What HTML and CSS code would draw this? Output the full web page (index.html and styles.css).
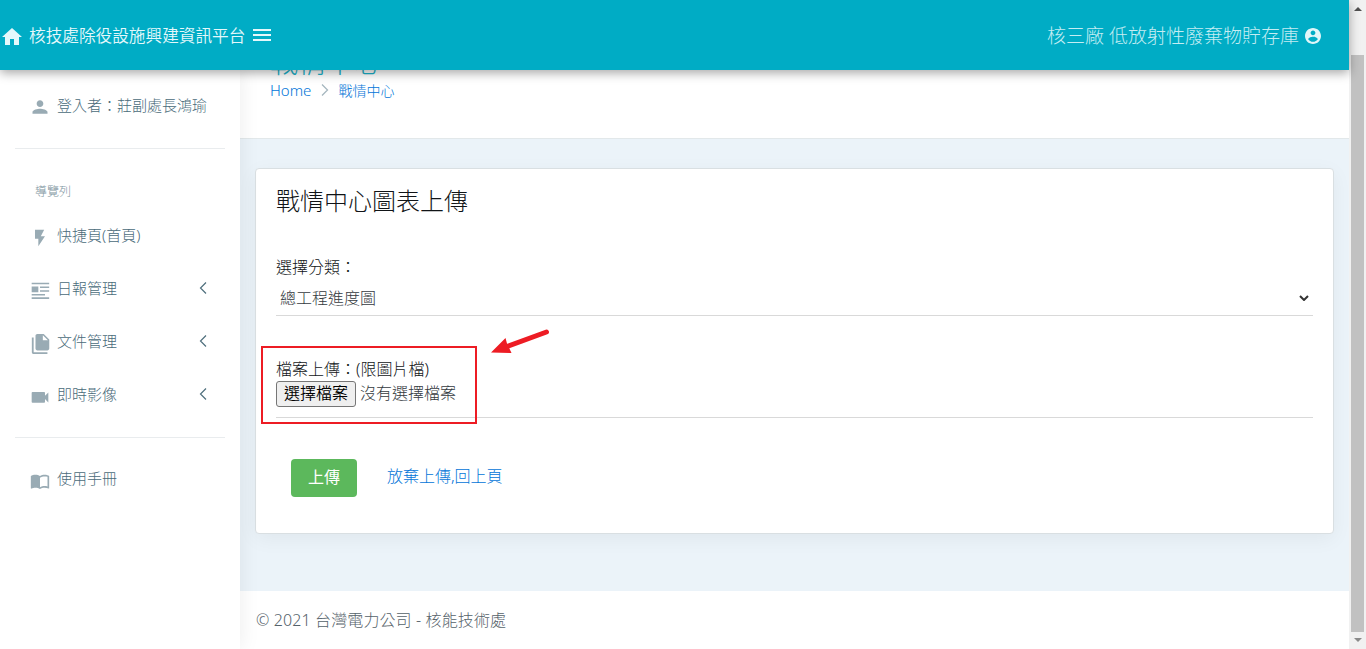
FILE: index.html
```html
<!DOCTYPE html>
<html lang="zh-Hant">
<head>
	<meta charset="UTF-8">
	<title>戰情中心圖表上傳</title>
	<link rel="stylesheet" href="styles.css">
</head>
<body>
	<div class="window">
		<div class="app">
			<header class="topbar">
				<div class="brand">
					<svg class="icon-home" viewBox="2 3 20 17"><path d="M10 20v-6h4v6h5v-8h3L12 3 2 12h3v8z"/></svg>
					<span>核技處除役設施興建資訊平台</span>
					<svg class="icon-menu" viewBox="3 6 18 12"><path d="M3 18h18v-2H3v2zm0-5h18v-2H3v2zm0-7v2h18V6H3z"/></svg>
				</div>
				<div class="site">
					<span>核三廠 低放射性廢棄物貯存庫</span>
					<svg class="icon-account" viewBox="2 2 20 20"><path d="M12 2C6.48 2 2 6.48 2 12s4.48 10 10 10 10-4.48 10-10S17.52 2 12 2zm0 3c1.66 0 3 1.34 3 3s-1.34 3-3 3-3-1.34-3-3 1.34-3 3-3zm0 14.2c-2.5 0-4.71-1.28-6-3.22.03-1.99 4-3.08 6-3.08 1.99 0 5.97 1.09 6 3.08-1.29 1.94-3.5 3.22-6 3.22z"/></svg>
				</div>
			</header>
			<div class="body">
				<nav class="sidebar">
					<div class="item user">
						<svg viewBox="0 0 24 24"><path d="M12 12c2.21 0 4-1.79 4-4s-1.79-4-4-4-4 1.79-4 4 1.79 4 4 4zm0 2c-2.67 0-9 1.34-9 4v2h18v-2c0-2.66-6.33-4-9-4z"/></svg>
						<span>登入者：莊副處長鴻瑜</span>
					</div>
					<hr>
					<div class="nav-title">導覽列</div>
					<a class="item">
						<svg viewBox="0 0 24 24"><path d="M6 2v11h4v9l8-12h-5l4-8z"/></svg>
						<span>快捷頁(首頁)</span>
					</a>
					<a class="item">
						<svg viewBox="0 0 24 24"><path d="M2 2h21v2H2zM2 6.500h8v7H2zM12 6.500h11v2H12zM12 11h11v2H12zM2 15.500h16v2H2zM2 19.500h21v2H2z"/></svg>
						<span>日報管理</span>
						<svg class="arrow" viewBox="0 0 8 12"><path d="M7 .5L1.500 6 7 11.500"/></svg>
					</a>
					<a class="item">
						<svg class="big" viewBox="0 0 24 24"><path d="M15 1H8c-1.100 0-1.990.9-1.990 2L6 17c0 1.100.89 2 1.990 2H19c1.100 0 2-.9 2-2V7l-6-6zM4 5H2v16c0 1.100.9 2 2 2h15v-2H4V5zm10 3V2.500L19.500 8H14z"/></svg>
						<span>文件管理</span>
						<svg class="arrow" viewBox="0 0 8 12"><path d="M7 .5L1.500 6 7 11.500"/></svg>
					</a>
					<a class="item">
						<svg viewBox="0 0 24 24"><path d="M18 10.500V7c0-.55-.45-1-1-1H3c-.55 0-1 .45-1 1v11c0 .55.45 1 1 1h14c.55 0 1-.45 1-1v-3.500l4 4v-12l-4 4z"/></svg>
						<span>即時影像</span>
						<svg class="arrow" viewBox="0 0 8 12"><path d="M7 .5L1.500 6 7 11.500"/></svg>
					</a>
					<hr>
					<a class="item manual">
						<svg viewBox="0 0 24 24"><path d="M21 5c-1.110-.35-2.330-.5-3.500-.5-1.950 0-4.050.4-5.500 1.500-1.450-1.100-3.550-1.500-5.500-1.500S2.450 4.900 1 6v14.650c0 .25.25.5.5.5.1 0 .15-.05.25-.05C3.100 20.450 5.050 20 6.500 20c1.950 0 4.050.4 5.500 1.500 1.350-.85 3.800-1.500 5.500-1.500 1.650 0 3.350.3 4.750 1.050.1.05.15.05.25.05.25 0 .5-.25.5-.5V6c-.6-.45-1.250-.75-2-1zm0 13.500c-1.100-.35-2.300-.5-3.500-.5-1.700 0-4.150.65-5.500 1.500V8c1.350-.85 3.800-1.500 5.500-1.500 1.200 0 2.400.15 3.500.5v11.500z"/></svg>
						<span>使用手冊</span>
					</a>
				</nav>
				<main class="content">
					<div class="page-head">
						<h1>戰情中心</h1>
						<div class="crumbs">
							<a>Home</a>
							<svg viewBox="0 0 8 12"><path d="M1 .5L6.500 6 1 11.500"/></svg>
							<a class="here">戰情中心</a>
						</div>
					</div>
					<section class="card">
						<h2>戰情中心圖表上傳</h2>
						<label class="category-label">選擇分類：</label>
						<div class="select">
							<span>總工程進度圖</span>
							<svg viewBox="0 0 10 6"><path d="M1 1l4 4 4-4"/></svg>
						</div>
						<div class="upload">
							<label>檔案上傳：(限圖片檔)</label>
							<div class="file">
								<button class="file-btn">選擇檔案</button>
								<span>沒有選擇檔案</span>
							</div>
							<div class="mark"></div>
							<svg class="mark-arrow" viewBox="0 0 60 28"><path class="shaft" d="M56.500 4L17 18.500"/><path d="M1 24.500L15.500 10l1.500 5.500 4.500 9.500z"/></svg>
						</div>
						<div class="actions">
							<button class="submit">上傳</button>
							<a>放棄上傳,回上頁</a>
						</div>
					</section>
					<footer>© 2021 台灣電力公司 - 核能技術處</footer>
				</main>
			</div>
		</div>
		<div class="scrollbar">
			<i class="up"></i>
			<div class="thumb"></div>
			<i class="down"></i>
		</div>
	</div>
</body>
</html>
```
FILE: styles.css
```css
*{
	margin: 0;
	padding: 0;
	box-sizing: border-box;
}
body{
	font-family: "Noto Sans", "Noto Sans CJK TC", sans-serif;
	font-weight: 300;
	font-size: 16px;
	color: #111417;
	overflow: hidden;
}
svg{
	display: block;
	flex: none;
	fill: currentColor;
}
button{
	font: inherit;
}
.window{
	display: flex;
	height: 649px;
}
.app{
	width: 1349px;
	display: flex;
	flex-direction: column;
}
.topbar{
	height: 70px;
	flex: none;
	display: flex;
	justify-content: space-between;
	align-items: center;
	padding: 1px 28px 0 2px;
	background: #00acc5;
	color: #e4f8fb;
	position: relative;
	z-index: 3;
	box-shadow: 0 3px 10px rgba(0,0,0,.35);
}
.brand,
.site{
	display: flex;
	align-items: center;
	white-space: nowrap;
}
.brand{
	font-size: 16.650px;
	font-weight: 350;
}
.brand span{
	width: 217px;
	margin: 0 7px 2px 7px;
}
.icon-home{
	width: 20px;
	height: 17px;
	margin-top: 2px;
}
.icon-menu{
	width: 18px;
	height: 14px;
	margin-bottom: 2px;
}
.site{
	font-size: 19px;
	color: #c5edf3;
}
.site span{
	margin-bottom: 1px;
}
.icon-account{
	width: 16px;
	height: 16px;
	margin-left: 6px;
	color: #e0f6f9;
}
.body{
	flex: 1;
	display: flex;
	min-height: 0;
}

/* 左側選單 */
.sidebar{
	width: 240px;
	flex: none;
	padding: 21px 15px 0;
	background: #fff;
	color: #4a6b7a;
	position: relative;
	z-index: 2;
	box-shadow: 0 0 20px rgba(0,0,0,.08);
}
.sidebar hr{
	border: 0;
	border-top: 1px solid #e9ecee;
}
.item{
	display: flex;
	align-items: center;
	height: 53px;
	padding: 0 18px 0 15px;
	font-size: 15px;
}
.item span{
	margin-bottom: 4px;
}
.item svg{
	width: 20px;
	height: 20px;
	margin: 2px 7px 0 0;
	color: #99abb4;
}
.item .big{
	width: 22px;
	height: 22px;
	margin: 2px 5px 0 0;
}
.item .arrow{
	width: 8px;
	height: 12px;
	margin: -3px 0 0 auto;
	fill: none;
	stroke: #4f6f7d;
	stroke-width: 1.200;
}
.user{
	height: 30px;
	padding-right: 0;
	margin-bottom: 27px;
	white-space: nowrap;
}
.nav-title{
	margin: 33px 0 8px 20px;
	font-size: 12px;
	line-height: 20px;
	color: #7f96a1;
}
.sidebar .item + hr{
	margin-top: 15px;
}
.sidebar .user + hr{
	margin-top: 0;
}
.manual{
	margin-top: 15px;
}

/* 內容區 */
.content{
	flex: 1;
	display: flex;
	flex-direction: column;
	background: #ebf3f9;
}
.page-head{
	height: 69px;
	flex: none;
	padding-left: 30px;
	background: #fff;
	border-bottom: 1px solid #e2e8ea;
}
.page-head h1{
	margin-top: -25px;
	font-size: 28px;
	line-height: 34px;
	font-weight: 300;
	color: #1cb2ca;
}
.crumbs{
	display: flex;
	align-items: center;
	height: 22px;
	font-size: 15px;
	color: #0275d8;
}
.crumbs svg{
	width: 8px;
	height: 12px;
	margin: 0 9px 0 10px;
	fill: none;
	stroke: #a6b7bf;
	stroke-width: 1.300;
}
.here{
	font-size: 14px;
}
.card{
	height: 366px;
	flex: none;
	margin: 29px 15px 0;
	padding: 16px 20px 0;
	background: #fff;
	border: 1px solid #d9dfe2;
	border-radius: 4px;
	box-shadow: 0 5px 20px rgba(0,0,0,.05);
}
.card h2{
	font-size: 24px;
	line-height: 32px;
	font-weight: 300;
}
.category-label{
	display: block;
	margin-top: 38px;
	line-height: 24px;
}
.select{
	display: flex;
	justify-content: space-between;
	align-items: center;
	height: 37px;
	padding: 0 4px;
	border-bottom: 1px solid #d9d9d9;
	color: #343a40;
}
.select svg{
	width: 10px;
	height: 6px;
	margin-top: 2px;
	fill: none;
	stroke: #333;
	stroke-width: 2;
}
.upload{
	position: relative;
	height: 102px;
	padding-top: 41px;
	border-bottom: 1px solid #d9d9d9;
}
.upload label{
	display: block;
	line-height: 24px;
}
.file{
	display: flex;
	color: #343a40;
	line-height: 24px;
}
.file-btn{
	width: 80px;
	height: 26px;
	margin-right: 4px;
	padding-bottom: 2px;
	font-weight: 350;
	line-height: 20px;
	color: #000;
	background: #efefef;
	border: 1px solid #767676;
	border-radius: 3px;
}
.mark{
	position: absolute;
	left: -15px;
	top: 30px;
	width: 216px;
	height: 78px;
	border: 2px solid #ed1c24;
}
.mark-arrow{
	position: absolute;
	left: 214px;
	top: 12px;
	width: 60px;
	height: 28px;
	color: #ed1c24;
}
.mark-arrow .shaft{
	fill: none;
	stroke: #ed1c24;
	stroke-width: 5;
	stroke-linecap: round;
}
.actions{
	display: flex;
	padding: 41px 0 0 15px;
}
.submit{
	width: 66px;
	height: 38px;
	margin-right: 30px;
	padding-bottom: 4px;
	font-weight: 400;
	color: #fff;
	background: #5cb85c;
	border: 0;
	border-radius: 4px;
}
.actions a{
	color: #0275d8;
	line-height: 34px;
}
footer{
	height: 58px;
	margin-top: auto;
	padding-left: 16px;
	background: #fff;
	color: #55626a;
	line-height: 58px;
	letter-spacing: .12px;
}

/* 捲軸 */
.scrollbar{
	width: 17px;
	display: flex;
	flex-direction: column;
	align-items: center;
	background: #f1f1f1;
}
.thumb{
	width: 13px;
	height: 577px;
	margin: 44px 0 6px;
	background: #c1c1c1;
}
.up,
.down{
	border: 4px solid transparent;
}
.up{
	margin-top: 7px;
	border-top: 0;
	border-bottom-color: #505050;
}
.down{
	border-bottom: 0;
	border-top-color: #8a8a8a;
}
```
